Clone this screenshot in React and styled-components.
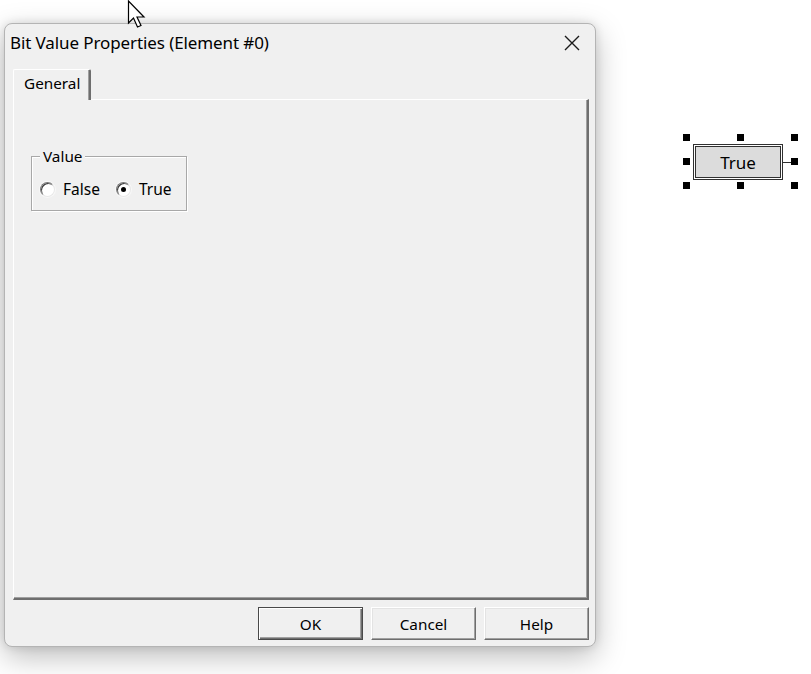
import styled, { createGlobalStyle } from "styled-components";

const GlobalStyle = createGlobalStyle`
  html, body {
    margin: 0;
    padding: 0;
    background: #ffffff;
  }
  body {
    font-family: "Noto Sans", "Open Sans", sans-serif;
  }
`;

const Page = styled.div`
  position: relative;
  width: 811px;
  height: 674px;
  padding: 23px 0 0 4px;
  box-sizing: border-box;
  overflow: hidden;
`;

const Dialog = styled.div`
  width: 592px;
  height: 624px;
  box-sizing: border-box;
  background: #f0f0f0;
  border: 1px solid #b4b4b4;
  border-radius: 8px;
  box-shadow: 0 10px 30px rgba(0, 0, 0, 0.26), 0 0 10px rgba(0, 0, 0, 0.12);
  display: flex;
  flex-direction: column;
`;

const TitleBar = styled.div`
  height: 36px;
  display: flex;
  align-items: center;
  justify-content: space-between;
  padding: 0 12px 0 5px;
  font-size: 17px;
  letter-spacing: -0.1px;
  color: #000;
`;

const CloseButton = styled.div`
  width: 22px;
  height: 22px;
  display: flex;
  align-items: center;
  justify-content: center;
  margin-top: 1px;
`;

const Body = styled.div`
  flex: 1;
  display: flex;
  flex-direction: column;
  padding: 9px 6px 6px 8px;
`;

const TabStrip = styled.div`
  display: flex;
  height: 30px;
`;

const Tab = styled.div`
  width: 78px;
  box-sizing: border-box;
  border-top: 1px solid #ffffff;
  border-left: 1px solid #ffffff;
  border-right: 2px solid #6e6e6e;
  border-radius: 2px 2px 0 0;
  box-shadow: inset -1px 0 0 #a0a0a0;
  padding: 3px 0 0 10px;
  font-size: 15.3px;
  color: #000;
  margin-bottom: -1px;
  position: relative;
  z-index: 1;
  background: #f0f0f0;
`;

const Pane = styled.div`
  height: 501px;
  box-sizing: border-box;
  border-top: 1px solid #ffffff;
  border-left: 1px solid #ffffff;
  border-right: 2px solid #6e6e6e;
  border-bottom: 2px solid #6e6e6e;
  box-shadow: inset -1px -1px 0 #a0a0a0;
  padding: 56px 0 0 17px;
`;

const GroupBox = styled.div`
  position: relative;
  width: 156px;
  height: 55px;
  box-sizing: border-box;
  border: 1px solid #a8a8a8;
  box-shadow: inset 1px 1px 0 #ffffff, 1px 1px 0 #ffffff;
  padding: 22px 0 0 8px;
  display: flex;
  align-items: flex-start;
  gap: 16px;
`;

const Caption = styled.span`
  position: absolute;
  left: 8px;
  top: -11px;
  padding: 0 3px;
  background: #f0f0f0;
  font-size: 15.3px;
  line-height: 20px;
  color: #000;
`;

const RadioLabel = styled.label`
  display: flex;
  align-items: center;
  gap: 8px;
  font-size: 15.5px;
  line-height: 20px;
  color: #000;
`;

const RadioCircle = styled.span`
  width: 15px;
  height: 15px;
  box-sizing: border-box;
  border-radius: 50%;
  background: #ffffff;
  border: 1px solid;
  border-color: #7a7a7a #e8e8e8 #e8e8e8 #7a7a7a;
  box-shadow: inset 1px 1px 0 #3c3c3c, 0 0 0 1px #f8f8f8;
  display: flex;
  align-items: center;
  justify-content: center;

  &::after {
    content: "";
    width: 5px;
    height: 5px;
    border-radius: 50%;
    margin: 1px 0 0 1px;
    background: ${({ $checked }) => ($checked ? "#000" : "transparent")};
  }
`;

const ButtonRow = styled.div`
  display: flex;
  justify-content: flex-end;
  gap: 8px;
  margin-top: 7px;
`;

const Button = styled.div`
  width: 105px;
  height: 33px;
  box-sizing: border-box;
  display: flex;
  align-items: center;
  justify-content: center;
  font-size: 15.3px;
  color: #000;
  background: #f0f0f0;
  border: 1px solid;
  border-color: ${({ $default }) =>
    $default ? "#4a4a4a" : "#ffffff #6e6e6e #6e6e6e #ffffff"};
  box-shadow: ${({ $default }) =>
    $default
      ? "inset 1px 1px 0 #ffffff, inset -1px -1px 0 #6e6e6e, inset -2px -2px 0 #a0a0a0"
      : "inset -1px -1px 0 #a0a0a0, inset 1px 1px 0 #e3e3e3"};
`;

const Canvas = styled.div`
  position: absolute;
  left: 683px;
  top: 134px;
  width: 115px;
  height: 55px;
`;

const Handle = styled.span`
  position: absolute;
  width: 7px;
  height: 7px;
  background: #000;
  left: ${({ $x }) => $x}px;
  top: ${({ $y }) => $y}px;
`;

const BitBox = styled.div`
  position: absolute;
  left: 10px;
  top: 10px;
  width: 90px;
  height: 36px;
  box-sizing: border-box;
  border: 1px solid #303030;
  padding: 1px;
  background: #ffffff;

  &::after {
    content: "";
    position: absolute;
    left: 89px;
    top: 17px;
    width: 8px;
    height: 1px;
    background: #303030;
  }
`;

const BitInner = styled.div`
  height: 100%;
  box-sizing: border-box;
  border: 1px solid #303030;
  background: #dcdcdc;
  display: flex;
  align-items: center;
  justify-content: center;
  font-size: 17px;
  color: #000;
`;

const Cursor = styled.svg`
  position: absolute;
  left: 127px;
  top: 0;
`;

const handles = [
  [0, 0], [54, 0], [108, 0],
  [0, 24], [108, 24],
  [0, 48], [54, 48], [108, 48],
];

export default function App() {
  return (
    <Page>
      <GlobalStyle />
      <Dialog>
        <TitleBar>
          <span>Bit Value Properties (Element #0)</span>
          <CloseButton>
            <svg width="16" height="16" viewBox="0 0 16 16">
              <path d="M1 1 L15 15 M15 1 L1 15" stroke="#1a1a1a" strokeWidth="1.4" />
            </svg>
          </CloseButton>
        </TitleBar>
        <Body>
          <TabStrip>
            <Tab>General</Tab>
          </TabStrip>
          <Pane>
            <GroupBox>
              <Caption>Value</Caption>
              <RadioLabel>
                <RadioCircle />
                False
              </RadioLabel>
              <RadioLabel>
                <RadioCircle $checked />
                True
              </RadioLabel>
            </GroupBox>
          </Pane>
          <ButtonRow>
            <Button $default>OK</Button>
            <Button>Cancel</Button>
            <Button>Help</Button>
          </ButtonRow>
        </Body>
      </Dialog>

      <Canvas>
        <BitBox>
          <BitInner>True</BitInner>
        </BitBox>
        {handles.map(([x, y]) => (
          <Handle key={`${x}-${y}`} $x={x} $y={y} />
        ))}
      </Canvas>

      <Cursor width="22" height="30" viewBox="0 0 22 30">
        <path
          d="M1.5 1 L1.5 23 L6.5 18 L10.5 27 L14 25.5 L10 17 L17 17 Z"
          fill="#ffffff"
          stroke="#000000"
          strokeWidth="1.2"
          strokeLinejoin="miter"
        />
      </Cursor>
    </Page>
  );
}
